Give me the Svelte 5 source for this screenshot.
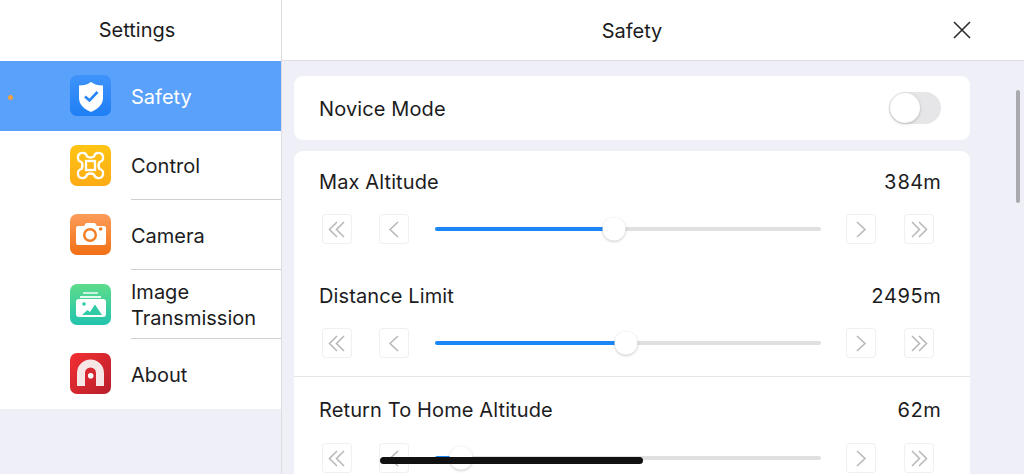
<script>
  const menu = [
    { id: 'safety', label: 'Safety', active: true },
    { id: 'control', label: 'Control' },
    { id: 'camera', label: 'Camera' },
    { id: 'image', label: 'Image Transmission' },
    { id: 'about', label: 'About' }
  ];
  const sliders = [
    { label: 'Max Altitude', value: '384m', pos: 179, divided: false },
    { label: 'Distance Limit', value: '2495m', pos: 191, divided: true },
    { label: 'Return To Home Altitude', value: '62m', pos: 26, divided: false }
  ];
</script>

{#snippet chevron(kind)}
  <button class="step" aria-label={kind}>
    <svg viewBox="0 0 30 30" width="30" height="30" fill="none" stroke="#b9b9bd" stroke-width="1.6">
      {#if kind === 'first'}
        <path d="M15 8 7.500 15.500l7.500 7.500M22 8l-7.500 7.500 7.500 7.500" />
      {:else if kind === 'prev'}
        <path d="M19 8l-8 7.500 8 7.500" />
      {:else if kind === 'next'}
        <path d="M11 8l8 7.500-8 7.500" />
      {:else}
        <path d="M8 8l7.500 7.500L8 23M15 8l7.500 7.500L15 23" />
      {/if}
    </svg>
  </button>
{/snippet}

{#snippet icon(id)}
  <svg class="icon" viewBox="0 0 41 41" width="41" height="41">
    <defs>
      <linearGradient id="g-safety" x1="0" y1="0" x2="0" y2="1"><stop offset="0" stop-color="#3f93fa" /><stop offset="1" stop-color="#1f7ff5" /></linearGradient>
      <linearGradient id="g-control" x1="0" y1="0" x2="0" y2="1"><stop offset="0" stop-color="#ffc414" /><stop offset="1" stop-color="#feab14" /></linearGradient>
      <linearGradient id="g-camera" x1="0" y1="0" x2="0" y2="1"><stop offset="0" stop-color="#fc9d5a" /><stop offset="1" stop-color="#f26f14" /></linearGradient>
      <linearGradient id="g-image" x1="0" y1="0" x2="0" y2="1"><stop offset="0" stop-color="#5ddc8a" /><stop offset="1" stop-color="#22c4ae" /></linearGradient>
      <linearGradient id="g-about" x1="0" y1="0" x2="1" y2="1"><stop offset="0" stop-color="#f32f33" /><stop offset="1" stop-color="#b81f2b" /></linearGradient>
    </defs>
    <rect width="41" height="41" rx="7" fill="url(#g-{id})" />
    {#if id === 'safety'}
      <path d="M21 7c3 2.500 7 3.500 12 3.500V23c0 6.500-5 11-12 14C14 34 9 29.500 9 23V10.500c5 0 9-1 12-3.500z" fill="#fff" />
      <path d="M15 21.500l4.500 4 8-8.500" fill="none" stroke="#2a86f7" stroke-width="2.600" />
    {:else if id === 'control'}
      <g fill="none" stroke="#fff" stroke-width="2.300">
        <rect x="16" y="16" width="9" height="9" />
        <path d="M17 11.500A4.600 4.600 0 1 0 11.500 17Q13.500 20.500 11.500 24A4.600 4.600 0 1 0 17 29.500Q20.500 27.500 24 29.500A4.600 4.600 0 1 0 29.500 24Q27.500 20.500 29.500 17A4.600 4.600 0 1 0 24 11.500Q20.500 13.500 17 11.500z" />
      </g>
    {:else if id === 'camera'}
      <path d="M8 12h6l2-3h9l2 3h7a2 2 0 0 1 2 2v15a2 2 0 0 1-2 2H8a2 2 0 0 1-2-2V14a2 2 0 0 1 2-2z" fill="#fff" />
      <circle cx="20" cy="21" r="5.800" fill="none" stroke="#f27d22" stroke-width="2.400" />
      <circle cx="30.700" cy="15" r="1.800" fill="#f27d22" />
    {:else if id === 'image'}
      <rect x="13" y="8" width="15" height="2" fill="#c9f2e0" />
      <rect x="10" y="12" width="21" height="2" fill="#e4f9ef" />
      <rect x="6" y="15" width="30" height="18" rx="3" fill="#fff" />
      <circle cx="14" cy="20" r="1.800" fill="#2fcba6" />
      <path d="M12 31l5.500-5 2.500 2 5-7.500 7 10.500z" fill="#2fcba6" />
    {:else}
      <path d="M7 33V20a13.500 13.500 0 0 1 27 0v13h-8V20a5.500 5.500 0 0 0-11 0v13z" fill="#f6e6e6" />
      <circle cx="20.700" cy="22.700" r="2.800" fill="#fff" />
    {/if}
  </svg>
{/snippet}

<div class="app">
  <aside class="side">
    <header class="side-head">Settings</header>
    <nav class="menu">
      {#each menu as m}
        <div class="row" class:active={m.active}>
          {#if m.active}<span class="dot"></span>{/if}
          {@render icon(m.id)}
          <div class="row-label">{m.label}</div>
        </div>
      {/each}
    </nav>
    <div class="side-rest"></div>
  </aside>

  <main class="pane">
    <header class="pane-head">
      <span>Safety</span>
      <svg class="close" viewBox="0 0 20 20" width="20" height="20" fill="none" stroke="#2b2b2b" stroke-width="1.600">
        <path d="M2 2l16 16M18 2 2 18" />
      </svg>
    </header>
    <div class="content">
      <section class="card novice">
        <span class="novice-label">Novice Mode</span>
        <span class="toggle"><span class="knob"></span></span>
      </section>
      <section class="card">
        {#each sliders as s}
          <div class="item" class:divided={s.divided}>
            <div class="item-head"><span>{s.label}</span><span class="value">{s.value}</span></div>
            <div class="controls">
              {@render chevron('first')}
              {@render chevron('prev')}
              <div class="track">
                <div class="fill" style="width:{s.pos}px"></div>
                <div class="thumb" style="left:{s.pos}px"></div>
              </div>
              {@render chevron('next')}
              {@render chevron('last')}
            </div>
          </div>
        {/each}
      </section>
    </div>
    <div class="scrollbar"></div>
  </main>
  <div class="home"></div>
</div>

<style>
  :global(body) { margin: 0; background: #eff0f7; }
  .app {
    position: relative;
    display: flex;
    width: 1024px;
    height: 474px;
    overflow: hidden;
    background: #eff0f7;
    font-family: Inter, "Liberation Sans", sans-serif;
    font-size: 20px;
    color: #1c1c1e;
  }
  .side {
    width: 281px;
    flex: none;
    display: flex;
    flex-direction: column;
    border-right: 1px solid #dcdce2;
  }
  .side-head {
    height: 61px;
    flex: none;
    box-sizing: border-box;
    padding-bottom: 1px;
    display: flex;
    align-items: center;
    justify-content: center;
    padding-right: 7px;
    background: #fff;
  }
  .menu { background: #fff; }
  .row {
    position: relative;
    height: 69.500px;
    display: flex;
    align-items: center;
    gap: 20px;
    padding-left: 70px;
  }
  .row.active { background: #59a1fb; color: #fff; }
  .row:not(.active):not(:last-child)::after {
    content: "";
    position: absolute;
    left: 131px;
    right: 0;
    bottom: 0;
    height: 1px;
    background: #cfcfd4;
  }
  .row-label { width: 140px; line-height: 26px; padding-top: 2px; }
  .dot {
    position: absolute;
    left: 8px;
    top: 34px;
    width: 5px;
    height: 5px;
    border-radius: 50%;
    background: #f0a040;
  }
  .icon { flex: none; }
  .side-rest { flex: 1; }
  .pane {
    position: relative;
    flex: 1;
    min-width: 0;
    display: flex;
    flex-direction: column;
  }
  .pane-head {
    position: relative;
    height: 60px;
    flex: none;
    box-sizing: content-box;
    display: flex;
    align-items: center;
    justify-content: center;
    padding-right: 42px;
    background: #fff;
    border-bottom: 1px solid #dedee4;
  }
  .pane-head span { padding-top: 2px; }
  .close { position: absolute; right: 52px; top: 20px; }
  .content {
    flex: 1;
    padding: 15px 54px 0 12px;
    display: flex;
    flex-direction: column;
    gap: 11px;
    letter-spacing: 0.12px;
  }
  .card { background: #fff; border-radius: 9px; }
  .novice {
    height: 64px;
    display: flex;
    align-items: center;
    justify-content: space-between;
    padding: 0 29px 0 25px;
    flex: none;
  }
  .novice-label { padding-top: 2px; }
  .toggle {
    position: relative;
    width: 52px;
    height: 32px;
    border-radius: 16px;
    background: #e6e6e8;
  }
  .knob {
    position: absolute;
    left: 1px;
    top: 1px;
    width: 30px;
    height: 30px;
    border-radius: 50%;
    background: #fff;
    box-shadow: 0 1px 3px rgba(0, 0, 0, 0.22);
  }
  .item { padding: 18px 0 0; height: 96px; }
  .item.divided { border-bottom: 1px solid #e6e6ea; height: 93px; }
  .divided + .item { padding-top: 20px; }
  .divided + .item .controls { margin-top: 20px; }
  .item-head {
    display: flex;
    justify-content: space-between;
    padding: 0 29px 0 25px;
    height: 26px;
    line-height: 26px;
  }
  .value { font-variant-numeric: tabular-nums; }
  .controls {
    display: flex;
    align-items: center;
    margin-top: 19px;
    padding-left: 28px;
  }
  .step {
    flex: none;
    width: 30px;
    height: 30px;
    padding: 0;
    background: #fff;
    border: 0;
    border-radius: 4px;
    box-shadow: inset 0 0 0 1px #f0f0ed;
  }
  .step svg { display: block; }
  .step:nth-child(2) { margin-left: 27px; }
  .step:nth-child(4) { margin-left: 25px; }
  .step:nth-child(5) { margin-left: 28px; }
  .track {
    position: relative;
    flex: none;
    width: 386px;
    height: 4px;
    margin-left: 26px;
    border-radius: 2px;
    background: #e0e0e3;
  }
  .fill {
    position: absolute;
    left: 0;
    top: 0;
    bottom: 0;
    border-radius: 2px;
    background: #1c86f6;
  }
  .thumb {
    position: absolute;
    top: 2px;
    width: 23px;
    height: 23px;
    transform: translate(-50%, -50%);
    border-radius: 50%;
    background: #fff;
    box-shadow: 0 1px 3px rgba(0, 0, 0, 0.22);
  }
  .scrollbar {
    position: absolute;
    left: 734px;
    top: 90px;
    width: 4px;
    height: 113px;
    border-radius: 2px;
    background: #a9a9ae;
  }
  .home {
    position: absolute;
    left: 380px;
    top: 457px;
    width: 263px;
    height: 7px;
    border-radius: 4px;
    background: #111;
  }
</style>
